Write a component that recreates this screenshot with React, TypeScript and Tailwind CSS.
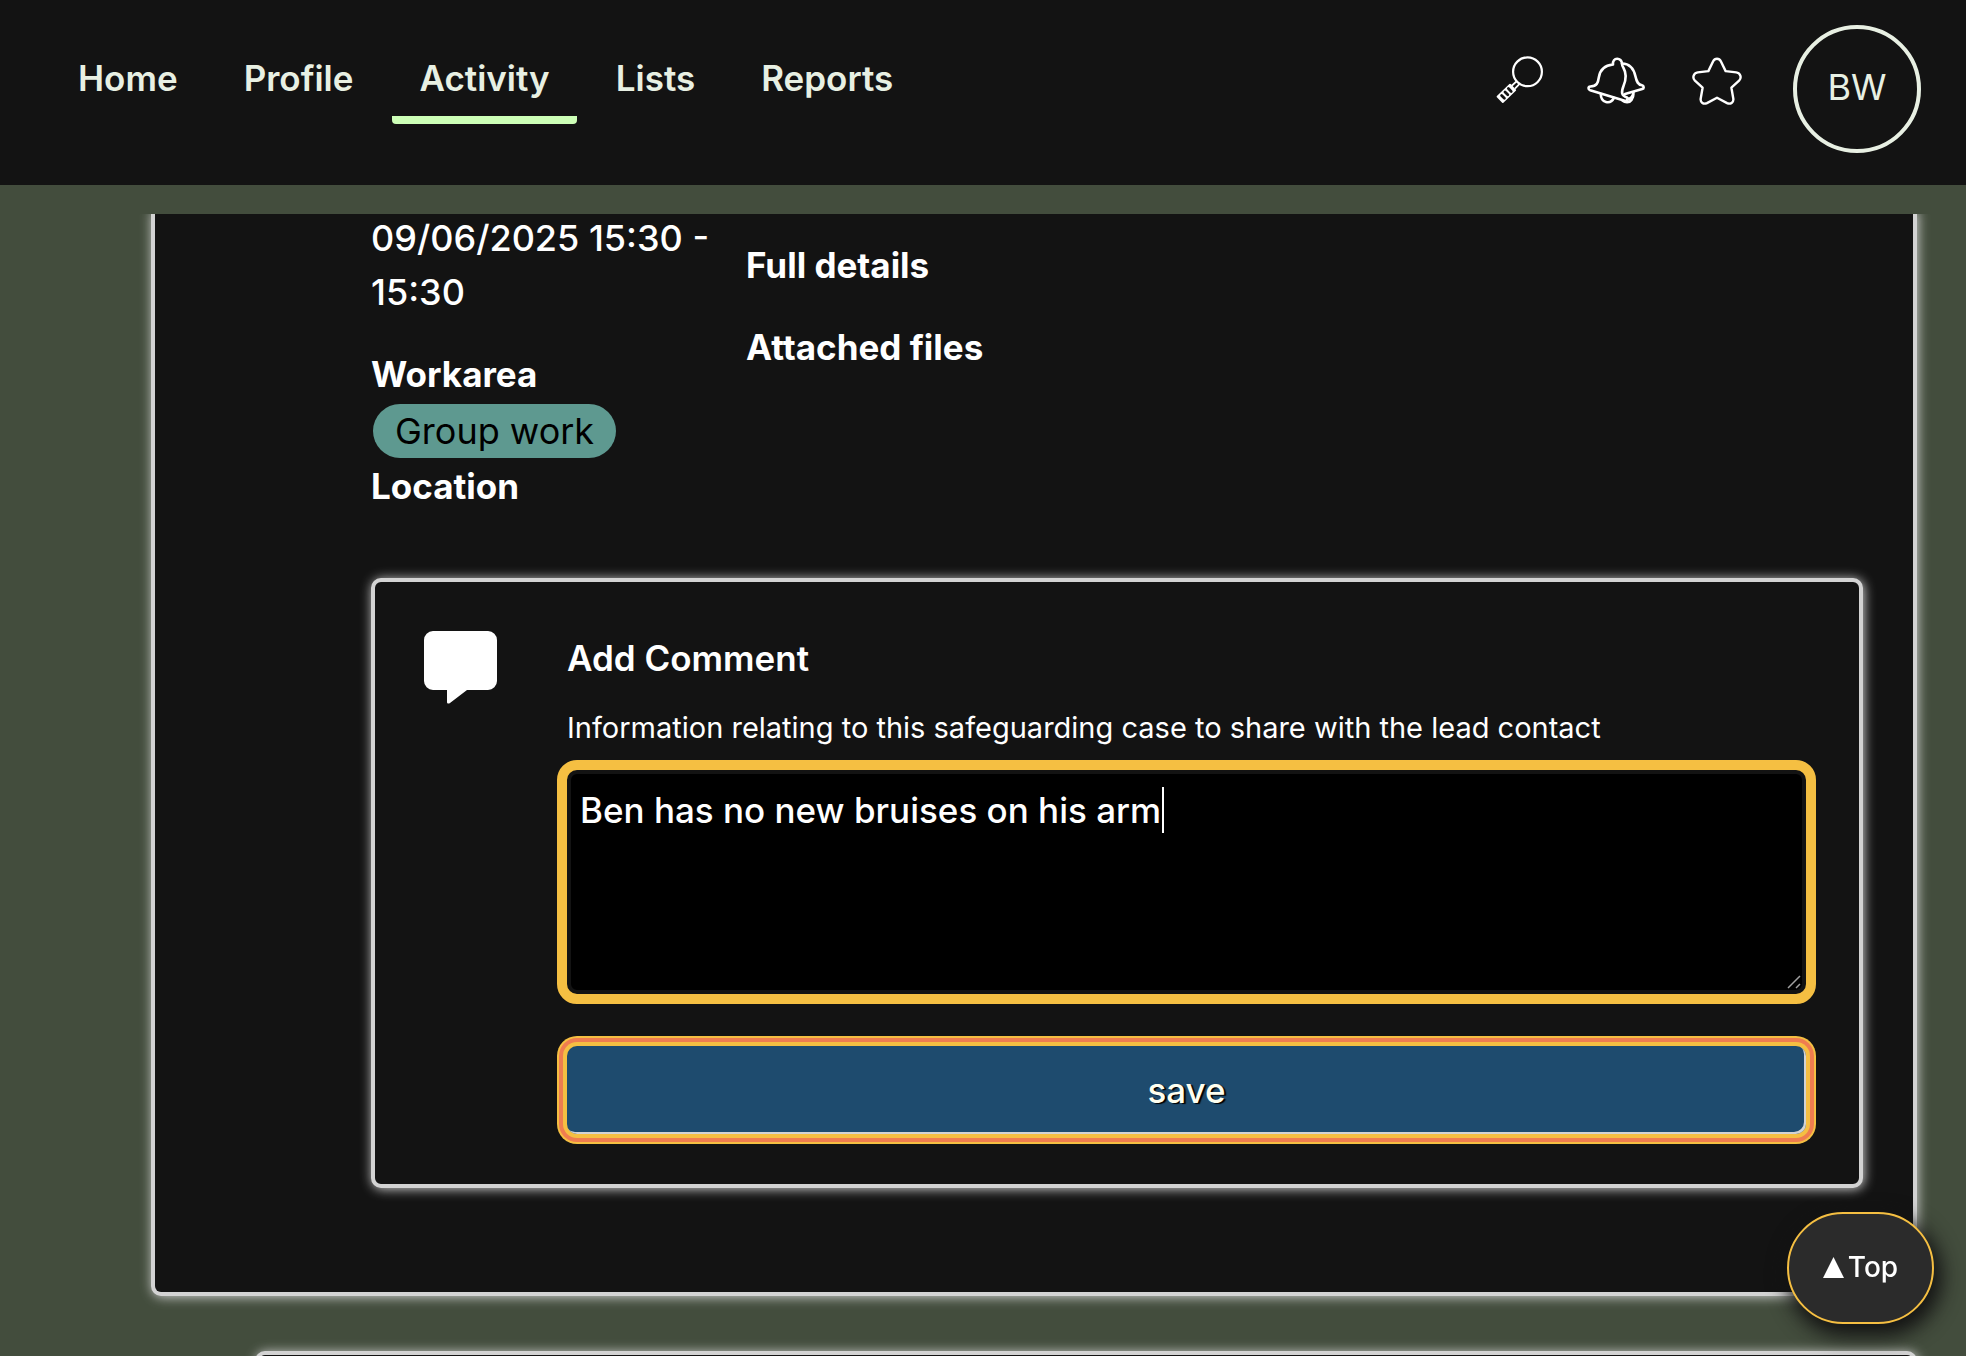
import { useState } from "react";

const navItems = ["Home", "Profile", "Activity", "Lists", "Reports"];

const glow = "shadow-[1px_1px_12px_#d3d3d3]";

function SearchIcon() {
  return (
    <svg width="48" height="48" viewBox="0 0 48 48" fill="none" stroke="white" strokeWidth="2.2" aria-hidden="true">
      <circle cx="31.500" cy="15.800" r="14.400" />
      <path d="M21 24.800 15.500 30M23.800 27.600 19 32.600" strokeWidth="1.800" />
      <path d="M14 28.600 19.200 34 6.800 46 1.500 40.700Z" fill="white" strokeWidth="1.800" strokeLinejoin="round" />
      <path d="M5.600 39.400 8.400 42.200M9 36 11.800 38.800M12.400 32.600 15.200 35.400" stroke="#131313" strokeWidth="2.800" strokeLinecap="round" />
    </svg>
  );
}

function BellsIcon() {
  return (
    <svg width="58" height="48" viewBox="0 0 58 48" fill="none" stroke="white" strokeWidth="2.6" strokeLinecap="round" strokeLinejoin="round" aria-hidden="true">
      <path d="M26 7.5C25 0 35 0 35 7c0 1.600.5 2.400 1.500 4 3.500 6 2.500 12 0 18-2.300 6-2.500 9.500 3.500 11.500 1.500.8.8 3.700-1.500 3.600L3.200 33.200C.8 32.400 1 29.700 3.400 29.500c6.600-.4 7.600-3.500 8.400-9C13 12.500 18.500 8.200 26 7.500Z" />
      <path d="M35 6.500c8 .2 12 6 13.500 13 1.200 5.500 2.500 8.300 6.500 8.800 2 .4 2.300 3.200.2 3.800L38 37" />
      <path d="M13.800 37c0 9 9.500 11 13.200 3.800M40 42.500c3.500-.2 6.500-3.500 6.500-7.300M35.500 43.500c2.500 2.400 7 2.500 9-.5 1.500-2 2-4 2-6.500" />
    </svg>
  );
}

function StarIcon() {
  return (
    <svg width="50" height="48" viewBox="0 0 52 50" fill="none" stroke="white" strokeWidth="2.500" strokeLinejoin="round" aria-hidden="true">
      <path d="M22 4.500C23.800 1 28.200 1 30 4.500L35 14.700l11 1.300c4.500.6 6 5.500 3 8.700L41 32l2 11.500c.5 4-3 6-6.500 4.500L26 42.400 15.500 48C12 49.600 8.500 47.500 9 43.500L11 32 3 24.700c-3-3.200-1.500-8.100 3-8.700l11-1.300Z" />
    </svg>
  );
}

function CommentIcon() {
  return (
    <svg className="shrink-0" width="73" height="73" viewBox="0 0 73 73" fill="white" aria-hidden="true">
      <path d="M9 0h55a9 9 0 0 1 9 9v41a9 9 0 0 1-9 9H43L26 72c-1.600 1.200-3 .5-3-1V59H9a9 9 0 0 1-9-9V9a9 9 0 0 1 9-9Z" />
    </svg>
  );
}

export default function App() {
  const [comment, setComment] = useState("Ben has no new bruises on his arm");

  return (
    <div className="flex h-screen flex-col overflow-hidden bg-[#434d3d] font-['Inter',sans-serif] text-[35px] leading-[54px] text-white">
      <header className="flex h-[185px] shrink-0 items-start justify-between bg-[#131313] pr-[45px] pl-[51px] text-[#e8f0e3]">
        <nav className="flex gap-3 pt-[51px] font-semibold">
          {navItems.map((item) => (
            <a
              key={item}
              href={"#" + item.toLowerCase()}
              aria-current={item === "Activity" ? "page" : undefined}
              className={
                item === "Activity"
                  ? "rounded-b border-b-8 border-[#cdffb7] px-[27px] pb-[11px]"
                  : "px-[27px] pb-[11px]"
              }
            >
              {item}
            </a>
          ))}
        </nav>
        <div className="flex items-start pt-[25px]">
          <button type="button" aria-label="Search" className="mt-[31px] mr-[43px]"><SearchIcon /></button>
          <button type="button" aria-label="Notifications" className="mt-[32px] mr-[47px]"><BellsIcon /></button>
          <button type="button" aria-label="Favourites" className="mt-[32px] mr-[51px]"><StarIcon /></button>
          <button type="button" aria-label="Account" className="size-32 rounded-full border-4 border-[#e8f0e3] pb-1 text-[36px]">BW</button>
        </div>
      </header>

      <main className="mt-[29px] min-h-0 flex-1 overflow-hidden pr-[49px] pl-[151px]">
        <section className={`-mt-1 rounded-b-[10px] border-4 border-t-0 border-[#d3d3d3] bg-[#131313] pt-px pr-[50px] pb-[104px] pl-[216px] ${glow}`}>
          <div className="flex">
            <div className="w-[375px] shrink-0">
              <p className="w-[350px] text-[36px] font-medium">09/06/2025 15:30 - 15:30</p>
              <h3 className="mt-7 font-bold">Workarea</h3>
              <span className="mt-[3px] ml-[2px] block w-fit rounded-full bg-[#5e9990] px-[22px] text-[36px] text-black">Group work</span>
              <h3 className="mt-px font-bold">Location</h3>
            </div>
            <div className="pt-[27px] font-bold">
              <h3>Full details</h3>
              <h3 className="mt-7">Attached files</h3>
            </div>
          </div>

          <form
            onSubmit={(e) => e.preventDefault()}
            className={`mt-[65px] flex rounded-[10px] border-4 border-[#d3d3d3] bg-[#131313] pt-[49px] pr-[53px] pb-[50px] pl-[49px] ${glow}`}
          >
            <CommentIcon />
            <div className="ml-[70px] min-w-0 flex-1">
              <h2 className="font-semibold">Add Comment</h2>
              <label htmlFor="comment" className="mt-[22px] block text-[29px] leading-[42px]">
                Information relating to this safeguarding case to share with the lead contact
              </label>
              <div className="relative mt-[21px]">
                <textarea
                  id="comment"
                  value={comment}
                  onChange={(e) => setComment(e.target.value)}
                  className="block h-[224px] w-full resize-none rounded-[10px] border-4 border-[#131313] bg-black px-[9px] py-[9px] font-medium outline-10 outline-[#f5bf42]"
                />
                <span className="absolute top-[17px] left-[595px] h-[46px] w-[2px] bg-white" />
                <svg className="absolute right-[5px] bottom-[5px]" width="14" height="14" viewBox="0 0 14 14" stroke="#a0a0a0" strokeWidth="1.500" aria-hidden="true">
                  <path d="M1 13 13 1M9 13l4-4" />
                </svg>
              </div>
              <button
                type="submit"
                className="mt-[52px] block h-[88px] w-full rounded-[10px] bg-[#1e4b6e] font-medium text-[#fffff0] shadow-[inset_-2px_-2px_0_#d3d3d3,0_0_0_4px_#f5bf42,0_0_0_8px_#ef7d50,0_0_0_10px_#f5bf42] text-shadow-[2px_1px_1px_#000000]"
              >
                save
              </button>
            </div>
          </form>
        </section>

        <section className={`mt-[55px] ml-[104px] h-40 rounded-[10px] border-4 border-[#d3d3d3] bg-[#131313] ${glow}`} />
      </main>

      <button
        type="button"
        className="fixed right-8 bottom-8 flex h-28 w-[147px] items-center justify-center gap-1 rounded-[56px] border-2 border-[#f5bf42] bg-[#2b2b2b] pb-[2px] text-[28px] font-medium shadow-[4px_8px_20px_4px_#131313]"
      >
        <svg width="21" height="21" viewBox="0 0 21 21" fill="white" aria-hidden="true"><path d="M10.500 0 21 21H0Z" /></svg>
        Top
      </button>
    </div>
  );
}
